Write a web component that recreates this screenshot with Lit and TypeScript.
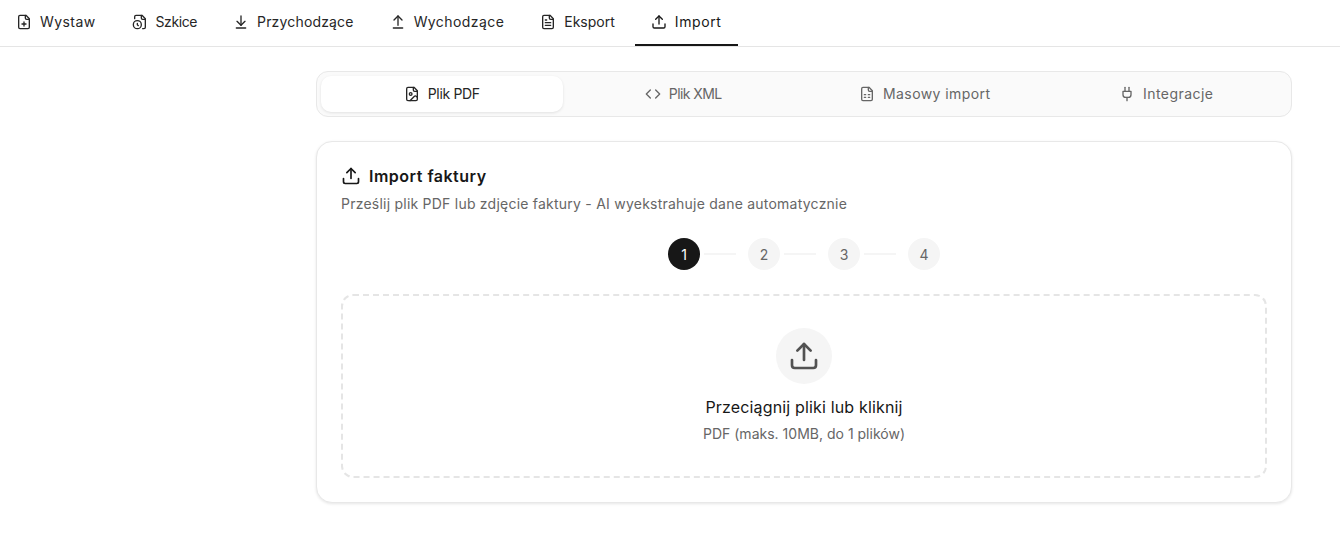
import { LitElement, html, css, svg } from "lit";
import { customElement } from "lit/decorators.js";

const file = "M15 2H6a2 2 0 0 0-2 2v16a2 2 0 0 0 2 2h12a2 2 0 0 0 2-2V7Z";
const fold = "M14 2v4a2 2 0 0 0 2 2h4";
const icons: Record<string, any> = {
  plus: svg`<path d=${file}/><path d=${fold}/><path d="M9 15h6"/><path d="M12 18v-6"/>`,
  clock: svg`<path d="M16 22h2a2 2 0 0 0 2-2V7l-5-5H6a2 2 0 0 0-2 2v3"/><path d=${fold}/><circle cx="8" cy="16" r="6"/><path d="M9.5 17.5 8 16.25V14"/>`,
  down: svg`<path d="M12 17V3"/><path d="m6 11 6 6 6-6"/><path d="M19 21H5"/>`,
  up: svg`<path d="m18 9-6-6-6 6"/><path d="M12 3v14"/><path d="M5 21h14"/>`,
  text: svg`<path d=${file}/><path d=${fold}/><path d="M10 9H8"/><path d="M16 13H8"/><path d="M16 17H8"/>`,
  upload: svg`<path d="M12 3v12"/><path d="m17 8-5-5-5 5"/><path d="M21 15v4a2 2 0 0 1-2 2H5a2 2 0 0 1-2-2v-4"/>`,
  image: svg`<path d=${file}/><path d=${fold}/><circle cx="10" cy="12" r="2"/><path d="m20 17-1.296-1.296a2.41 2.41 0 0 0-3.408 0L9 22"/>`,
  code: svg`<path d="m16 18 6-6-6-6"/><path d="m8 6-6 6 6 6"/>`,
  sheet: svg`<path d=${file}/><path d=${fold}/><path d="M8 13h2"/><path d="M14 13h2"/><path d="M8 17h2"/><path d="M14 17h2"/>`,
  plug: svg`<path d="M12 22v-5"/><path d="M9 8V2"/><path d="M15 8V2"/><path d="M18 8v5a4 4 0 0 1-4 4h-4a4 4 0 0 1-4-4V8Z"/>`,
};
const icon = (n: string, cls = "ic") =>
  html`<svg class=${cls} viewBox="0 0 24 24" fill="none" stroke="currentColor" stroke-width="2" stroke-linecap="round" stroke-linejoin="round">${icons[n]}</svg>`;

const NAV: [string, string, number][] = [
  ["plus", "Wystaw", 0.42], ["clock", "Szkice", -0.41], ["down", "Przychodzące", 0.17],
  ["up", "Wychodzące", 0.42], ["text", "Eksport", 0], ["upload", "Import", 0.62],
];
const SUB: [string, string, number][] = [
  ["image", "Plik PDF", -0.33], ["code", "Plik XML", -0.58], ["sheet", "Masowy import", 0.42], ["plug", "Integracje", 0.45],
];

@customElement("app-root")
export class AppRoot extends LitElement {
  static styles = css`
    :host { display: block; min-height: 548px; background: #fff; color: #171717;
      font-family: "Inter", "Liberation Sans", sans-serif; font-size: 14px; }
    * { box-sizing: border-box; }
    .ic { width: 16px; height: 16px; flex: none; }
    .nav { display: flex; gap: 4px; height: 47px; border-bottom: 1px solid #e5e5e5; }
    .nav-item { display: flex; align-items: center; gap: 8px; padding: 0 16px; height: 46px;
      font-size: 14px; color: #262626; border-bottom: 2px solid transparent; }
    .nav-item span { margin-bottom: 2px; }
    .nav-item.on { border-bottom-color: #171717; color: #171717; }
    main { margin-left: 316px; width: 976px; padding-top: 24px; }
    .sub { display: grid; grid-template-columns: repeat(4, 1fr); gap: 0; height: 46px; padding: 4px;
      background: #fafafa; border: 1px solid #e8e8e8; border-radius: 12px; }
    .sub-item { display: flex; align-items: center; justify-content: center; gap: 8px; border-radius: 10px;
      color: #666; padding-bottom: 1px; }
    .sub-item.on { background: #fff; color: #262626; box-shadow: 0 1px 3px rgba(0,0,0,.1); }
    .card { margin-top: 24px; height: 362px; padding: 24px; background: #fff; border: 1px solid #e8e8e8;
      border-radius: 16px; box-shadow: 0 1px 3px rgba(0,0,0,.1); }
    .title { display: flex; align-items: center; gap: 8px; height: 20px;
      font-size: 16px; font-weight: 600; letter-spacing: 0.5px; color: #171717; line-height: 24px; }
    .title .ic { width: 20px; height: 20px; }
    .desc { margin-top: 8px; height: 20px; line-height: 20px; color: #666; font-size: 14px; letter-spacing: 0.23px; }
    .steps { display: flex; justify-content: center; align-items: center; gap: 4px; margin-top: 24px; }
    .step { width: 32px; height: 32px; border-radius: 50%; background: #f5f5f5; color: #666; font-size: 14px;
      display: flex; align-items: center; justify-content: center; }
    .step.on { background: #171717; color: #fff; }
    .line { width: 32px; height: 2px; background: #f5f5f5; margin-right: 8px; }
    .drop { margin-top: 24px; height: 184px; border: 2px dashed #e5e5e5; border-radius: 12px;
      display: flex; flex-direction: column; align-items: center; padding-top: 32px; }
    .bubble { width: 56px; height: 56px; border-radius: 50%; background: #f5f5f5; color: #525252;
      display: flex; align-items: center; justify-content: center; }
    .bubble .ic { width: 32px; height: 32px; stroke-width: 2; }
    .drop-title { margin-top: 11px; font-size: 16px; line-height: 24px; color: #171717; letter-spacing: 0.16px; }
    .drop-sub { margin-top: 5px; font-size: 14px; line-height: 20px; color: #666; letter-spacing: 0.01px; }
  `;

  render() {
    return html`
      <nav class="nav">
        ${NAV.map(([i, t, s], k) => html`<div class="nav-item ${k === 5 ? "on" : ""}">${icon(i)}<span style="letter-spacing:${s}px">${t}</span></div>`)}
      </nav>
      <main>
        <div class="sub">
          ${SUB.map(([i, t, s], k) => html`<div class="sub-item ${k === 0 ? "on" : ""}">${icon(i)}<span style="letter-spacing:${s}px">${t}</span></div>`)}
        </div>
        <section class="card">
          <div class="title">${icon("upload")}<span>Import faktury</span></div>
          <div class="desc">Prześlij plik PDF lub zdjęcie faktury - AI wyekstrahuje dane automatycznie</div>
          <div class="steps">
            ${[1, 2, 3, 4].map((n) => html`
              <div class="step ${n === 1 ? "on" : ""}">${n}</div>
              ${n < 4 ? html`<div class="line"></div>` : ""}`)}
          </div>
          <div class="drop">
            <div class="bubble">${icon("upload")}</div>
            <div class="drop-title">Przeciągnij pliki lub kliknij</div>
            <div class="drop-sub">PDF (maks. 10MB, do 1 plików)</div>
          </div>
        </section>
      </main>
    `;
  }
}
